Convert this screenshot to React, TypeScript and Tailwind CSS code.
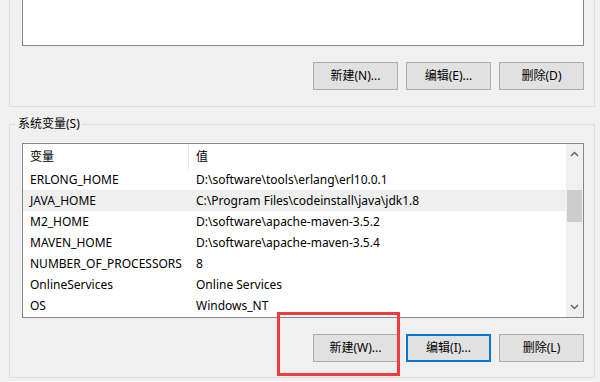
const rows: [string, string][] = [
  ['ERLONG_HOME', 'D:\\software\\tools\\erlang\\erl10.0.1'],
  ['JAVA_HOME', 'C:\\Program Files\\codeinstall\\java\\jdk1.8'],
  ['M2_HOME', 'D:\\software\\apache-maven-3.5.2'],
  ['MAVEN_HOME', 'D:\\software\\apache-maven-3.5.4'],
  ['NUMBER_OF_PROCESSORS', '8'],
  ['OnlineServices', 'Online Services'],
  ['OS', 'Windows_NT'],
]

function WinButton({ label, focused }: { label: string; focused?: boolean }) {
  return (
    <div
      className={
        focused
          ? 'w-[85px] h-[28px] flex items-center justify-center bg-[#e1e1e1] border-2 border-[#0078d7] text-[12px] leading-[16px] text-black'
          : 'w-[85px] h-[28px] flex items-center justify-center bg-[#e1e1e1] border border-[#adadad] text-[12px] leading-[16px] text-black'
      }
    >
      {label}
    </div>
  )
}

function Chevron({ up }: { up?: boolean }) {
  return (
    <svg width="9" height="6" viewBox="0 0 9 6" className="text-[#606060]">
      <path d={up ? 'M1 5 L4.5 1.5 L8 5' : 'M1 1 L4.5 4.5 L8 1'} fill="none" stroke="currentColor" strokeWidth="1.4" />
    </svg>
  )
}

export default function App() {
  return (
    <div
      className="relative w-[600px] h-[382px] overflow-hidden bg-[#f0f0f0] text-black"
      style={{ fontFamily: "'Noto Sans', 'Noto Sans CJK SC', sans-serif" }}
    >
      {/* 用户变量 (cut off at top) */}
      <div className="ml-[9px] mr-[5px] border-x border-b border-[#dcdcdc] pl-3 pr-[10px] pb-4">
        <div className="h-[46px] bg-white border-x border-b border-[#828790]" />
        <div className="flex justify-end gap-2 mt-4">
          <WinButton label="新建(N)..." />
          <WinButton label="编辑(E)..." />
          <WinButton label="删除(D)" />
        </div>
      </div>

      {/* 系统变量 */}
      <div className="relative mt-[17px] ml-[9px] mr-[5px] border border-[#dcdcdc] pl-3 pr-[10px] pt-[18px] pb-[15px]">
        <span className="absolute -top-[9px] left-[6px] bg-[#f0f0f0] px-[2px] text-[12px] leading-[16px]">
          系统变量(S)
        </span>

        <div className="h-[175px] bg-white border border-[#828790] flex">
          <div className="flex-1 flex flex-col text-[12px] leading-[16px]">
            <div className="h-[25px] flex items-center">
              <div className="w-[166px] h-full flex items-center pl-[7px] border-r border-[#e5e5e5]">变量</div>
              <div className="pl-[7px]">值</div>
            </div>
            {rows.map(([name, value], i) => (
              <div
                key={name}
                className={i === 1 ? 'h-[21px] flex items-center bg-[#efefef]' : 'h-[21px] flex items-center'}
              >
                <div className="w-[166px] pl-[7px] whitespace-nowrap overflow-hidden">{name}</div>
                <div className="pl-[7px] whitespace-nowrap">{value}</div>
              </div>
            ))}
          </div>

          <div className="w-[17px] bg-[#f0f0f0] flex flex-col items-center">
            <div className="h-[20px] flex items-center justify-center">
              <Chevron up />
            </div>
            <div className="flex-1 w-full px-px pt-[26px]">
              <div className="h-[32px] bg-[#cdcdcd]" />
            </div>
            <div className="h-[20px] flex items-center justify-center">
              <Chevron />
            </div>
          </div>
        </div>

        <div className="flex justify-end gap-2 mt-4">
          <WinButton label="新建(W)..." />
          <WinButton label="编辑(I)..." focused />
          <WinButton label="删除(L)" />
        </div>
      </div>

      {/* red highlight */}
      <div className="absolute left-[277px] top-[312px] w-[123px] h-[64px] border-[3px] border-[#f43a3a]" />
    </div>
  )
}
